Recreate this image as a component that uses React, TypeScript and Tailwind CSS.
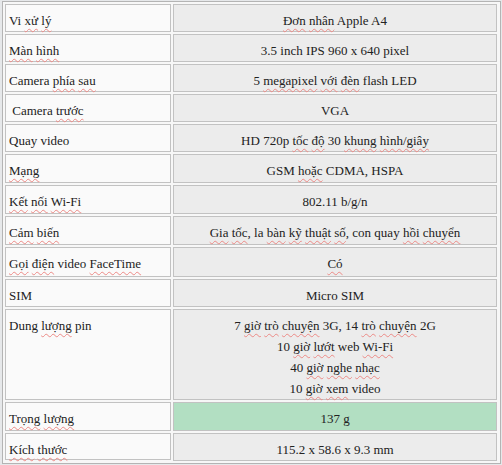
import React from 'react'

type Row = {
  label: string
  value: string[]
  h: string
  green?: boolean
}

// [[...]] marks a word the spell checker flagged
const rows: Row[] = [
  { label: 'Vi [[xử]] [[lý]]', value: ['[[Đơn]] [[nhân]] Apple A4'], h: 'h-[28px]' },
  { label: '[[Màn]] [[hình]]', value: ['3.5 inch IPS 960 x 640 pixel'], h: 'h-[28px]' },
  { label: 'Camera [[phía]] [[sau]]', value: ['5 [[megapixel]] [[với]] [[đèn]] flash LED'], h: 'h-[28px]' },
  { label: '\u00a0Camera [[trước]]', value: ['VGA'], h: 'h-[28px]' },
  { label: 'Quay video', value: ['HD 720p [[tốc]] [[độ]] 30 [[khung]] [[hình/giây]]'], h: 'h-[28px]' },
  { label: '[[Mạng]]', value: ['GSM [[hoặc]] CDMA, HSPA'], h: 'h-[29px]' },
  { label: '[[Kết]] [[nối]] [[Wi-Fi]]', value: ['802.11 b/g/n'], h: 'h-[29px]' },
  { label: '[[Cảm]] [[biến]]', value: ['[[Gia]] [[tốc]], la [[bàn]] [[kỹ]] [[thuật]] [[số]], con quay [[hồi]] [[chuyển]]'], h: 'h-[29px]' },
  { label: '[[Gọi]] [[điện]] video [[FaceTime]]', value: ['[[Có]]'], h: 'h-[30px]' },
  { label: 'SIM', value: ['Micro SIM'], h: 'h-[28px]' },
  {
    label: 'Dung [[lượng]] pin',
    value: [
      '7 [[giờ]] [[trò]] [[chuyện]] 3G, 14 [[trò]] [[chuyện]] 2G',
      '10 [[giờ]] [[lướt]] web [[Wi-Fi]]',
      '40 [[giờ]] [[nghe]] [[nhạc]]',
      '10 [[giờ]] [[xem]] video',
    ],
    h: 'h-[91px]',
  },
  { label: '[[Trọng]] [[lượng]]', value: ['137 g'], h: 'h-[29px]', green: true },
  { label: '[[Kích]] [[thước]]', value: ['115.2 x 58.6 x 9.3 mm'], h: 'h-[27px]' },
]

const Marked = ({ text }: { text: string }) => {
  const parts = text.split(/(\[\[[^\]]+\]\])/)
  return (
    <>
      {parts.map((p, i) =>
        p.startsWith('[[') ? (
          <span
            key={i}
            className="underline decoration-wavy decoration-[#ec8a86] decoration-[1px] underline-offset-[3px]"
          >
            {p.slice(2, -2)}
          </span>
        ) : (
          <span key={i}>{p}</span>
        )
      )}
    </>
  )
}

export default function App() {
  return (
    <div className="w-[502px] h-[465px] overflow-hidden bg-[#e6e8ea] pt-[1px] pl-[2px]">
      <div
        className="w-[499px] border border-[#b4b4b4] bg-[#f7f7f7] p-[2px] text-[13px] leading-[21px] text-[#222] whitespace-pre"
        style={{ fontFamily: '"Liberation Serif", "Times New Roman", serif' }}
      >
        <div className="grid grid-cols-[166px_324px] gap-[2px]">
          {rows.map((r) => (
            <React.Fragment key={r.label}>
              <div className={`${r.h} border border-[#c2c2c2] bg-[#fafafa] pl-[3px] pt-[5px]`}>
                <Marked text={r.label} />
              </div>
              <div
                className={`border border-[#c2c2c2] pt-[5px] text-center ${
                  r.green ? 'bg-[#b2dfc2]' : 'bg-[#ececec]'
                }`}
              >
                {r.value.map((v) => (
                  <div key={v}>
                    <Marked text={v} />
                  </div>
                ))}
              </div>
            </React.Fragment>
          ))}
        </div>
      </div>
    </div>
  )
}
